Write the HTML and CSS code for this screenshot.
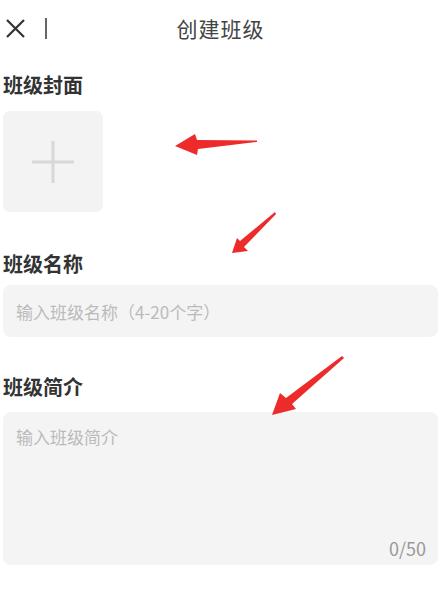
FILE: index.html
```html
<!DOCTYPE html>
<html lang="zh-CN">
<head>
    <meta charset="UTF-8">
    <meta name="viewport" content="width=device-width, initial-scale=1.0">
    <title>创建班级</title>
    <link rel="stylesheet" href="styles.css">
</head>
<body>
    <div class="page">
        <!-- Top bar -->
        <div class="top-bar">
            <div class="top-left">
                <svg class="close-icon" width="21" height="21" viewBox="0 0 21 21">
                    <path d="M2 2 L19 19 M19 2 L2 19" stroke="#333" stroke-width="2.2" fill="none"/>
                </svg>
                <span class="divider"></span>
            </div>
            <div class="title">创建班级</div>
            <div></div>
        </div>

        <!-- Cover -->
        <div class="label label-cover">班级封面</div>
        <div class="cover-box">
            <svg width="42" height="42" viewBox="0 0 42 42">
                <path d="M21 0 V42 M0 21 H42" stroke="#d8d8d8" stroke-width="3" fill="none"/>
            </svg>
        </div>

        <!-- Name -->
        <div class="label label-name">班级名称</div>
        <input class="name-input" type="text" placeholder="输入班级名称（4-20个字）">

        <!-- Intro -->
        <div class="label label-intro">班级简介</div>
        <div class="intro-box">
            <textarea class="intro-input" placeholder="输入班级简介"></textarea>
            <span class="counter">0/50</span>
        </div>

        <!-- Annotation arrows -->
        <svg class="arrows" width="448" height="594" viewBox="0 0 448 594">
            <polygon points="175,146 195,134 197,140 257,140.5 257,142 198,149 197,155" fill="#ee2b2b"/>
            <polygon points="232,253 237,238 240,241 275,212 276,214 244,247 248,251" fill="#ee2b2b"/>
            <polygon points="272,415 280,393 286,398 342,356 344,358 292,404 296,409" fill="#ee2b2b"/>
        </svg>
    </div>
</body>
</html>
```

FILE: styles.css
```css
/* Base */
body {
    margin: 0;
    background-color: #ffffff;
    font-family: "Noto Sans CJK SC", "Noto Sans", sans-serif;
}

.page {
    position: relative;
    width: 448px;
    height: 594px;
    padding: 0 10px 0 3px;
    box-sizing: border-box;
    overflow: hidden;
}

/* Top bar */
.top-bar {
    display: grid;
    grid-template-columns: 1fr auto 1fr;
    align-items: center;
    height: 56px;
    margin-left: -1px;
    padding-left: 3px;
    padding-right: 2px;
}

.top-left {
    display: flex;
    align-items: center;
    gap: 19px;
}

.close-icon {
    display: block;
}

.divider {
    display: block;
    width: 1.5px;
    height: 21px;
    background-color: #666;
}

.title {
    font-size: 21px;
    color: #444;
    letter-spacing: 1px;
}

/* Section labels */
.label {
    font-size: 20px;
    font-weight: bold;
    color: #333;
    line-height: 24px;
}

.label-cover {
    margin-top: 17px;
}

.label-name {
    margin-top: 40px;
}

.label-intro {
    margin-top: 38px;
}

/* Cover picker */
.cover-box {
    width: 100px;
    height: 101px;
    margin-top: 14px;
    background-color: #f3f3f3;
    border-radius: 7px;
    display: flex;
    align-items: center;
    justify-content: center;
}

/* Inputs */
.name-input {
    display: block;
    width: 100%;
    height: 52px;
    margin: 9px 0 0 0;
    padding: 0 13px;
    box-sizing: border-box;
    border: none;
    outline: none;
    border-radius: 8px;
    background-color: #f4f4f4;
    font-family: inherit;
    font-size: 17px;
    color: #333;
}

.name-input::placeholder,
.intro-input::placeholder {
    color: #bbbbbb;
}

.intro-box {
    position: relative;
    height: 153px;
    margin-top: 13px;
    background-color: #f4f4f4;
    border-radius: 8px;
}

.intro-input {
    display: block;
    width: 100%;
    height: 100%;
    padding: 12px 13px;
    box-sizing: border-box;
    border: none;
    outline: none;
    resize: none;
    background: transparent;
    font-family: inherit;
    font-size: 17px;
    line-height: 26px;
    color: #333;
}

.counter {
    position: absolute;
    right: 12px;
    bottom: 6px;
    font-size: 18px;
    line-height: 22px;
    color: #999;
}

/* Annotation layer */
.arrows {
    position: absolute;
    top: 0;
    left: 0;
    pointer-events: none;
}
```
